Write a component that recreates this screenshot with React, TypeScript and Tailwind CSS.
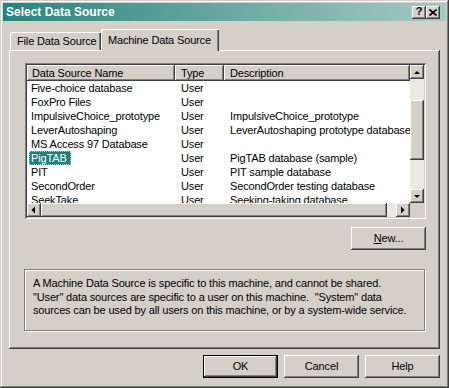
import React from "react";

const raisedBtn =
  "shadow-[inset_-1px_-1px_#404040,inset_1px_1px_#ffffff,inset_-2px_-2px_#808080]";

function ArrowIcon({ dir }: { dir: "up" | "down" | "left" | "right" }) {
  const pts: Record<string, string> = {
    up: "1,4 7,4 4,1",
    down: "1,1 7,1 4,4",
    left: "4,0.5 4,7.5 0.5,4",
    right: "1,0.5 1,7.5 4.5,4",
  };
  const horiz = dir === "left" || dir === "right";
  return (
    <svg
      width={horiz ? 6 : 8}
      height={horiz ? 8 : 5}
      viewBox={horiz ? "0 0 6 8" : "0 0 8 5"}
    >
      <polygon points={pts[dir]} fill="#000" />
    </svg>
  );
}

function ScrollBtn({ dir }: { dir: "up" | "down" | "left" | "right" }) {
  return (
    <div
      className={`w-[14px] h-[14px] shrink-0 bg-[#d4d0c8] flex items-center justify-center ${raisedBtn}`}
    >
      <ArrowIcon dir={dir} />
    </div>
  );
}

const rows: [string, string, string][] = [
  ["Five-choice database", "User", ""],
  ["FoxPro Files", "User", ""],
  ["ImpulsiveChoice_prototype", "User", "ImpulsiveChoice_prototype"],
  ["LeverAutoshaping", "User", "LeverAutoshaping prototype database"],
  ["MS Access 97 Database", "User", ""],
  ["PigTAB", "User", "PigTAB database (sample)"],
  ["PIT", "User", "PIT sample database"],
  ["SecondOrder", "User", "SecondOrder testing database"],
  ["SeekTake", "User", "Seeking-taking database"],
];

function PushButton({
  children,
  isDefault = false,
}: {
  children: React.ReactNode;
  isDefault?: boolean;
}) {
  return (
    <div
      className={`w-[75px] h-[23px] bg-[#d4d0c8] flex items-center justify-center text-black ${
        isDefault
          ? "shadow-[inset_0_0_0_1px_#000000,inset_-2px_-2px_#404040,inset_2px_2px_#ffffff,inset_-3px_-3px_#808080]"
          : raisedBtn
      }`}
    >
      {children}
    </div>
  );
}

export default function App() {
  return (
    <div className="w-[449px] h-[388px] bg-[#d4d0c8] p-[3px] flex flex-col font-['Liberation_Sans',Arial,sans-serif] text-[11px] tracking-[-0.15px] text-black shadow-[inset_-1px_-1px_#404040,inset_1px_1px_#d4d0c8,inset_-2px_-2px_#808080,inset_2px_2px_#ffffff] overflow-hidden">
      {/* Title bar */}
      <div className="h-[18px] shrink-0 flex items-center bg-gradient-to-r from-[#208680] to-[#a2cbc3] pl-[3px] pr-[6px]">
        <span className="text-white font-bold text-[12px] tracking-normal leading-none flex-1">
          Select Data Source
        </span>
        <div
          className={`w-[14px] h-[13px] bg-[#d4d0c8] flex items-center justify-center text-[11px] font-bold leading-none ${raisedBtn}`}
        >
          <span className="-mt-[1px]">?</span>
        </div>
        <div
          className={`w-[14px] h-[13px] bg-[#d4d0c8] flex items-center justify-center ${raisedBtn}`}
        >
          <svg width="8" height="7" viewBox="0 0 8 7">
            <path d="M0.5 0.5 L7.5 6.5 M7.5 0.5 L0.5 6.5" stroke="#000" strokeWidth="1.6" />
          </svg>
        </div>
      </div>

      {/* Body */}
      <div className="flex flex-col px-[6px] pt-[8px]">
        {/* Tabs */}
        <div className="h-[21px] flex items-end">
          <div className="ml-[1px] w-[91px] h-[18px] shrink-0 flex items-center whitespace-nowrap pl-[7px] pt-[1px] rounded-tl-[2px] shadow-[inset_1px_1px_#ffffff,inset_-1px_0_#404040,inset_-2px_0_#808080]">
            File Data Source
          </div>
          <div className="relative z-10 w-[118px] h-[22px] shrink-0 -mb-[1px] bg-[#d4d0c8] flex items-start whitespace-nowrap pt-[3px] pl-[7px] rounded-tl-[2px] shadow-[inset_1px_1px_#ffffff,inset_-1px_0_#404040,inset_-2px_0_#808080]">
            Machine Data Source
          </div>
        </div>

        {/* Tab panel */}
        <div
          className={`h-[299px] flex flex-col pl-[15px] pr-[14px] pt-[13px] ${raisedBtn}`}
        >
          {/* List view */}
          <div className="ml-[1px] h-[156px] p-[2px] bg-white flex flex-col shadow-[inset_1px_1px_#808080,inset_-1px_-1px_#ffffff,inset_2px_2px_#404040,inset_-2px_-2px_#d4d0c8]">
            <div className="flex h-[138px]">
              <div className="flex-1 min-w-0 flex flex-col overflow-hidden">
                <div className="h-[16px] shrink-0 flex bg-[#d4d0c8]">
                  <div className={`w-[148px] shrink-0 flex items-center pl-[5px] ${raisedBtn}`}>
                    Data Source Name
                  </div>
                  <div className={`w-[49px] shrink-0 flex items-center pl-[6px] ${raisedBtn}`}>
                    Type
                  </div>
                  <div className={`flex-1 flex items-center pl-[6px] ${raisedBtn}`}>
                    Description
                  </div>
                </div>
                {rows.map(([name, type, desc]) => (
                  <div key={name} className="h-[14px] shrink-0 flex items-center whitespace-nowrap">
                    <div className="w-[148px] shrink-0 pl-[2px] flex items-center">
                      {name === "PigTAB" ? (
                        <span className="pl-[2px] pr-[4px] h-[14px] flex items-center bg-[#22807c] text-white outline outline-1 outline-dotted outline-[#a8d0cc] -outline-offset-1">
                          {name}
                        </span>
                      ) : (
                        <span className="pl-[2px]">{name}</span>
                      )}
                    </div>
                    <div className="w-[49px] shrink-0 pl-[6px]">{type}</div>
                    <div className="flex-1 min-w-0 pl-[6px] overflow-hidden">{desc}</div>
                  </div>
                ))}
              </div>
              {/* Vertical scrollbar */}
              <div className="w-[14px] shrink-0 flex flex-col bg-[#ebe9e4]">
                <ScrollBtn dir="up" />
                <div className="h-[21px]" />
                <div className={`h-[60px] bg-[#d4d0c8] ${raisedBtn}`} />
                <div className="flex-1" />
                <ScrollBtn dir="down" />
              </div>
            </div>
            {/* Horizontal scrollbar */}
            <div className="h-[14px] flex bg-[#ebe9e4]">
              <ScrollBtn dir="left" />
              <div className={`w-[346px] bg-[#d4d0c8] ${raisedBtn}`} />
              <div className="flex-1" />
              <ScrollBtn dir="right" />
              <div className="w-[14px] bg-[#d4d0c8]" />
            </div>
          </div>

          {/* New button */}
          <div className="mt-[8px] self-end">
            <PushButton>
              <span>
                <span className="underline">N</span>ew...
              </span>
            </PushButton>
          </div>

          {/* Description group */}
          <div className="mt-[19px] mr-[1px] h-[62px] border border-[#808080] shadow-[inset_1px_1px_#ffffff,1px_1px_#ffffff] pl-[8px] pt-[7px] leading-[13.5px] whitespace-pre">
            <div>A Machine Data Source is specific to this machine, and cannot be shared.</div>
            <div>"User" data sources are specific to a user on this machine.  "System" data</div>
            <div>sources can be used by all users on this machine, or by a system-wide service.</div>
          </div>
        </div>

        {/* Bottom buttons */}
        <div className="mt-[6px] flex justify-end gap-[6px]">
          <PushButton isDefault>OK</PushButton>
          <PushButton>Cancel</PushButton>
          <PushButton>Help</PushButton>
        </div>
      </div>
    </div>
  );
}
